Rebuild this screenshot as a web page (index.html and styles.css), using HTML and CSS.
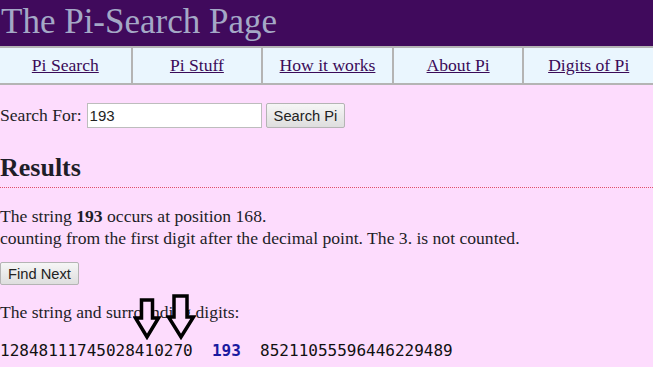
FILE: index.html
```html
<!DOCTYPE HTML>
<html>
<head>
  <title>The Pi-Search Page</title>
  <meta name="viewport" content="width=device-width, initial-scale=1">
  <link rel="stylesheet" href="styles.css">
</head>
<body>

  <div class="banner">
    <h1>The Pi-Search Page</h1>
  </div>

  <div class="menu">
    <a href="#">Pi Search</a>
    <a href="#">Pi Stuff</a>
    <a href="#">How it works</a>
    <a href="#">About Pi</a>
    <a href="#">Digits of Pi</a>
  </div>

  <form class="search-form" onsubmit="return false">
    <label for="searchText">Search For:</label>
    <input type="text" id="searchText" value="193">
    <button class="button">Search Pi</button>
  </form>

  <h2 class="results">Results</h2>

  <p class="found">
    The string <b>193</b> occurs at position 168.<br>
    counting from the first digit after the decimal point. The 3. is not counted.
  </p>

  <button class="button">Find Next</button>

  <div class="digits-block">
    <p class="digits-label">The string and surrounding digits:</p>
    <pre class="digits">12848111745028410270  <span class="hit">193</span>  85211055596446229489</pre>

    <!-- arrows pointing at the match -->
    <svg class="arrow arrow-one" width="28" height="42" viewBox="0 0 28 42">
      <path d="M8.5 2 H19.5 V20 H25.5 L14 39 L2.5 20 H8.5 Z" fill="#fddcfd" stroke="#000" stroke-width="3.5" stroke-linejoin="miter"/>
    </svg>
    <svg class="arrow arrow-two" width="30" height="46" viewBox="0 0 30 46">
      <path d="M8 2 H21 V23 H27.5 L15 43 L2.5 23 H8 Z" fill="#fddcfd" stroke="#000" stroke-width="3.5" stroke-linejoin="miter"/>
    </svg>
  </div>

</body>
</html>
```

FILE: styles.css
```css
body {
  margin: 0;
  background-color: #fddcfd;
  color: #1e1e28;
  font-family: "Liberation Serif", "Times New Roman", serif;
  font-size: 17.6px;
}
.banner {
  background-color: #400a5c;
  height: 46px;
}
.banner h1 {
  margin: 0;
  padding-left: 1px;
  font-size: 35px;
  font-weight: normal;
  line-height: 44px;
  color: #a4a8c6;
}
.menu {
  display: grid;
  grid-template-columns: repeat(5, 1fr);
  background-color: #eaf6fe;
  border-top: 2px solid #b4b4b4;
  border-bottom: 2px solid #b4b4b4;
}
.menu a {
  display: block;
  text-align: center;
  padding: 8px 0 8px 0;
  line-height: 19px;
  color: #3a0a58;
  border-left: 2px solid #b4b4b4;
}
.menu a:first-child { border-left: none; }
.search-form {
  display: flex;
  align-items: center;
  margin: 18px 0 0 0;
}
.search-form label { margin-right: 5px; }
.search-form input {
  width: 169px;
  height: 21px;
  margin: 0 4px 0 0;
  padding: 1px 2px;
  border: 1px solid #bdbdbd;
  background: #fff;
  font-family: "Liberation Sans", Arial, sans-serif;
  font-size: 15px;
  color: #222;
}
.button {
  font-family: "Liberation Sans", Arial, sans-serif;
  font-size: 14.7px;
  color: #222;
  height: 23px;
  padding: 0 7px;
  border: 1px solid #b4b4b4;
  border-radius: 2px;
  background: linear-gradient(#f6f6f6, #dedede);
}
.search-form .button { height: 25px; }
.results {
  margin: 25px 0 0 0;
  padding-bottom: 4px;
  font-size: 26px;
  line-height: 30px;
  border-bottom: 1px dotted #e0506a;
}
.found {
  margin: 17px 0 13px 0;
  line-height: 22px;
}
.digits-block {
  position: relative;
}
.digits-label {
  margin: 17px 0 0 0;
}
.digits {
  margin: 18px 0 0 0;
  font-family: "DejaVu Sans Mono", Consolas, monospace;
  font-size: 16px;
  color: #111;
}
.hit {
  color: #1a1aa0;
  font-weight: bold;
}
.arrow {
  position: absolute;
}
.arrow-one { left: 133px; top: -4px; }
.arrow-two { left: 166px; top: -8px; }
```
